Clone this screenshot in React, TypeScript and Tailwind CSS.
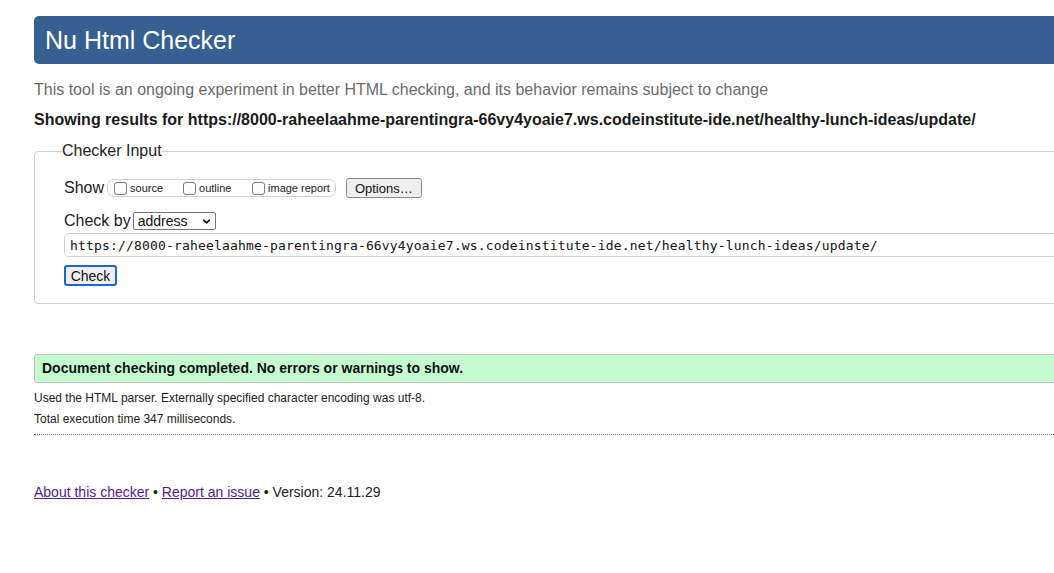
import { ChevronDown } from "lucide-react";

const url =
  "https://8000-raheelaahme-parentingra-66vy4yoaie7.ws.codeinstitute-ide.net/healthy-lunch-ideas/update/";

function Box({ label, width }: { label: string; width?: string }) {
  return (
    <label className={`flex items-center ${width ?? ""}`}>
      <span className="w-[13px] h-[13px] border border-[#7a7a7a] rounded-[3px] bg-white" />
      <span className="ml-[3px] text-[11px] leading-none text-[#222]">{label}</span>
    </label>
  );
}

export default function App() {
  return (
    <div className="w-[1054px] h-[573px] overflow-hidden bg-white font-['Liberation_Sans',Arial,sans-serif] text-[#111]">
      <div className="w-[1100px] pl-[34px] pt-[16px]">
        <h1 className="h-[48px] flex items-center pl-[11px] bg-[#365f92] rounded-[5px] text-white text-[25px] leading-none">
          Nu Html Checker
        </h1>

        <p className="mt-[16px] text-[16px] leading-[20px] text-[#6b6b6b]">
          This tool is an ongoing experiment in better HTML checking, and its behavior remains subject to change
        </p>
        <p className="mt-[10px] text-[16px] leading-[20px] font-bold text-[#1a1a1a]">
          Showing results for {url}
        </p>

        <fieldset className="mt-[11px] border border-[#cfcfcf] rounded-[4px] pl-[29px] pb-[15px] pt-[16px]">
          <legend className="-ml-[2px] px-0 text-[16px] leading-[20px] text-[#222]">Checker Input</legend>

          <div className="flex items-center h-[22px]">
            <span className="text-[16px] text-[#222]">Show</span>
            <div className="ml-[3px] h-[18px] flex items-center border border-[#cfcfcf] rounded-[7px] pl-[6px] pr-[5px]">
              <Box label="source" width="w-[69px]" />
              <Box label="outline" width="w-[69px]" />
              <Box label="image report" />
            </div>
            <button className="ml-[10px] h-[20px] w-[76px] border border-[#8a8a8a] rounded-[3px] bg-[#efefef] text-[13px] leading-none text-[#111]">
              Options…
            </button>
          </div>

          <div className="mt-[11px] flex items-center h-[22px]">
            <span className="text-[16px] text-[#222]">Check by</span>
            <div className="ml-[2px] w-[83px] h-[18px] flex items-center justify-between border border-[#767676] rounded-[2px] pl-[4px] pr-[3px] bg-white">
              <span className="text-[14px] leading-none text-[#111]">address</span>
              <ChevronDown className="w-[11px] h-[11px]" strokeWidth={3.5} />
            </div>
          </div>

          <div className="mt-[1px] h-[24px] flex items-center border border-[#cfcfcf] rounded-[5px] pl-[5px]">
            <span className="font-['DejaVu_Sans_Mono',monospace] text-[13px] tracking-[0.17px] leading-none text-[#111] whitespace-nowrap">
              {url}
            </span>
          </div>

          <button className="mt-[8px] h-[21px] w-[53px] border-2 border-[#1b67d0] rounded-[3px] bg-[#efefef] text-[14px] leading-none text-[#111]">
            Check
          </button>
        </fieldset>

        <div className="mt-[50px] h-[29px] flex items-center border border-[#c4c4c4] rounded-[3px] bg-[#c4fccf] pl-[7px]">
          <span className="text-[14px] font-bold text-[#111]">
            Document checking completed. No errors or warnings to show.
          </span>
        </div>

        <p className="mt-[5px] text-[12px] leading-[20px] text-[#222]">
          Used the HTML parser. Externally specified character encoding was utf-8.
        </p>
        <p className="mt-[1px] text-[12px] leading-[20px] text-[#222]">Total execution time 347 milliseconds.</p>
        <div className="mt-[5px] border-t border-dotted border-[#777]" />

        <p className="mt-[47px] text-[14px] leading-[20px] text-[#222]">
          <a className="underline text-[#551a8b]">About this checker</a>
          {" • "}
          <a className="underline text-[#551a8b]">Report an issue</a>
          {" • Version: 24.11.29"}
        </p>
      </div>
    </div>
  );
}
